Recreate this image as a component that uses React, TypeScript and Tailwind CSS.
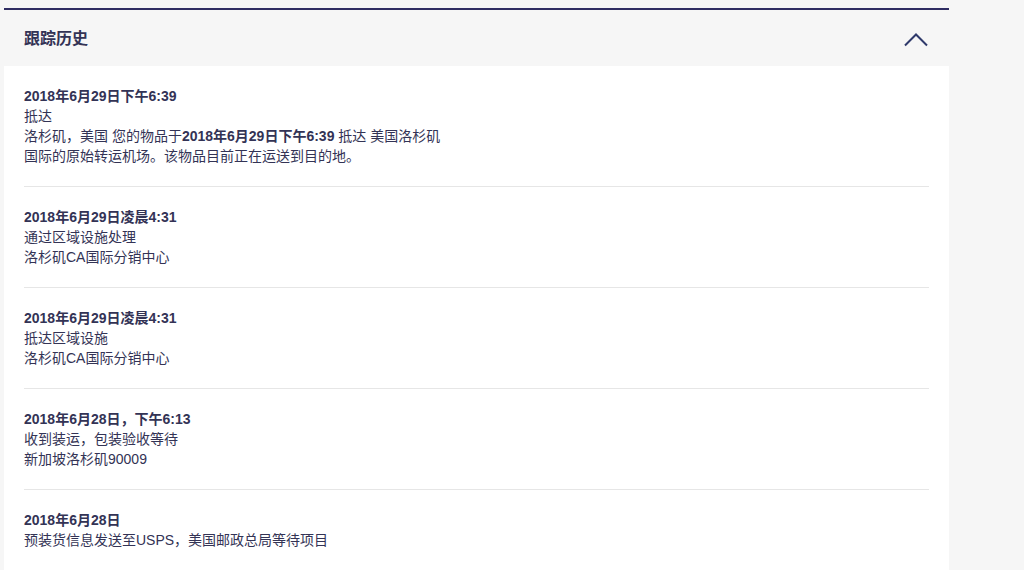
import React from "react";

type Entry = { date: string; lines: React.ReactNode[] };

const entries: Entry[] = [
  {
    date: "2018年6月29日下午6:39",
    lines: [
      "抵达",
      <>
        洛杉矶，美国 您的物品于<b className="font-bold">2018年6月29日下午6:39</b> 抵达 美国洛杉矶
        <br />
        国际的原始转运机场。该物品目前正在运送到目的地。
      </>,
    ],
  },
  { date: "2018年6月29日凌晨4:31", lines: ["通过区域设施处理", "洛杉矶CA国际分销中心"] },
  { date: "2018年6月29日凌晨4:31", lines: ["抵达区域设施", "洛杉矶CA国际分销中心"] },
  { date: "2018年6月28日，下午6:13", lines: ["收到装运，包装验收等待", "新加坡洛杉矶90009"] },
  { date: "2018年6月28日", lines: ["预装货信息发送至USPS，美国邮政总局等待项目"] },
];

export default function App() {
  return (
    <div
      className="h-screen overflow-hidden bg-[#f6f6f6] pt-2 pl-1"
      style={{ fontFamily: '"Liberation Sans", "Noto Sans CJK SC", sans-serif' }}
    >
      <div className="w-[945px] border-t-2 border-[#2f2d62]">
        <div className="flex h-[56px] items-center justify-between pl-5 pr-[20px]">
          <h2 className="mt-[2px] text-[16px] font-bold text-[#333355]">跟踪历史</h2>
          <svg width="24" height="14" viewBox="0 0 24 14" className="mr-[1px] mt-[4px]">
            <path d="M1 12.5 L12 1.5 L23 12.5" fill="none" stroke="#2f3a6b" strokeWidth="2" />
          </svg>
        </div>
        <div className="bg-white px-5">
          {entries.map((e, i) => (
            <div
              key={i}
              className={`py-5 text-[14px] leading-[20px] text-[#333355] ${
                i < entries.length - 1 ? "border-b border-[#e6e6e6]" : ""
              }`}
            >
              <p className="font-bold">{e.date}</p>
              {e.lines.map((l, j) => (
                <p key={j}>{l}</p>
              ))}
            </div>
          ))}
        </div>
      </div>
    </div>
  );
}
